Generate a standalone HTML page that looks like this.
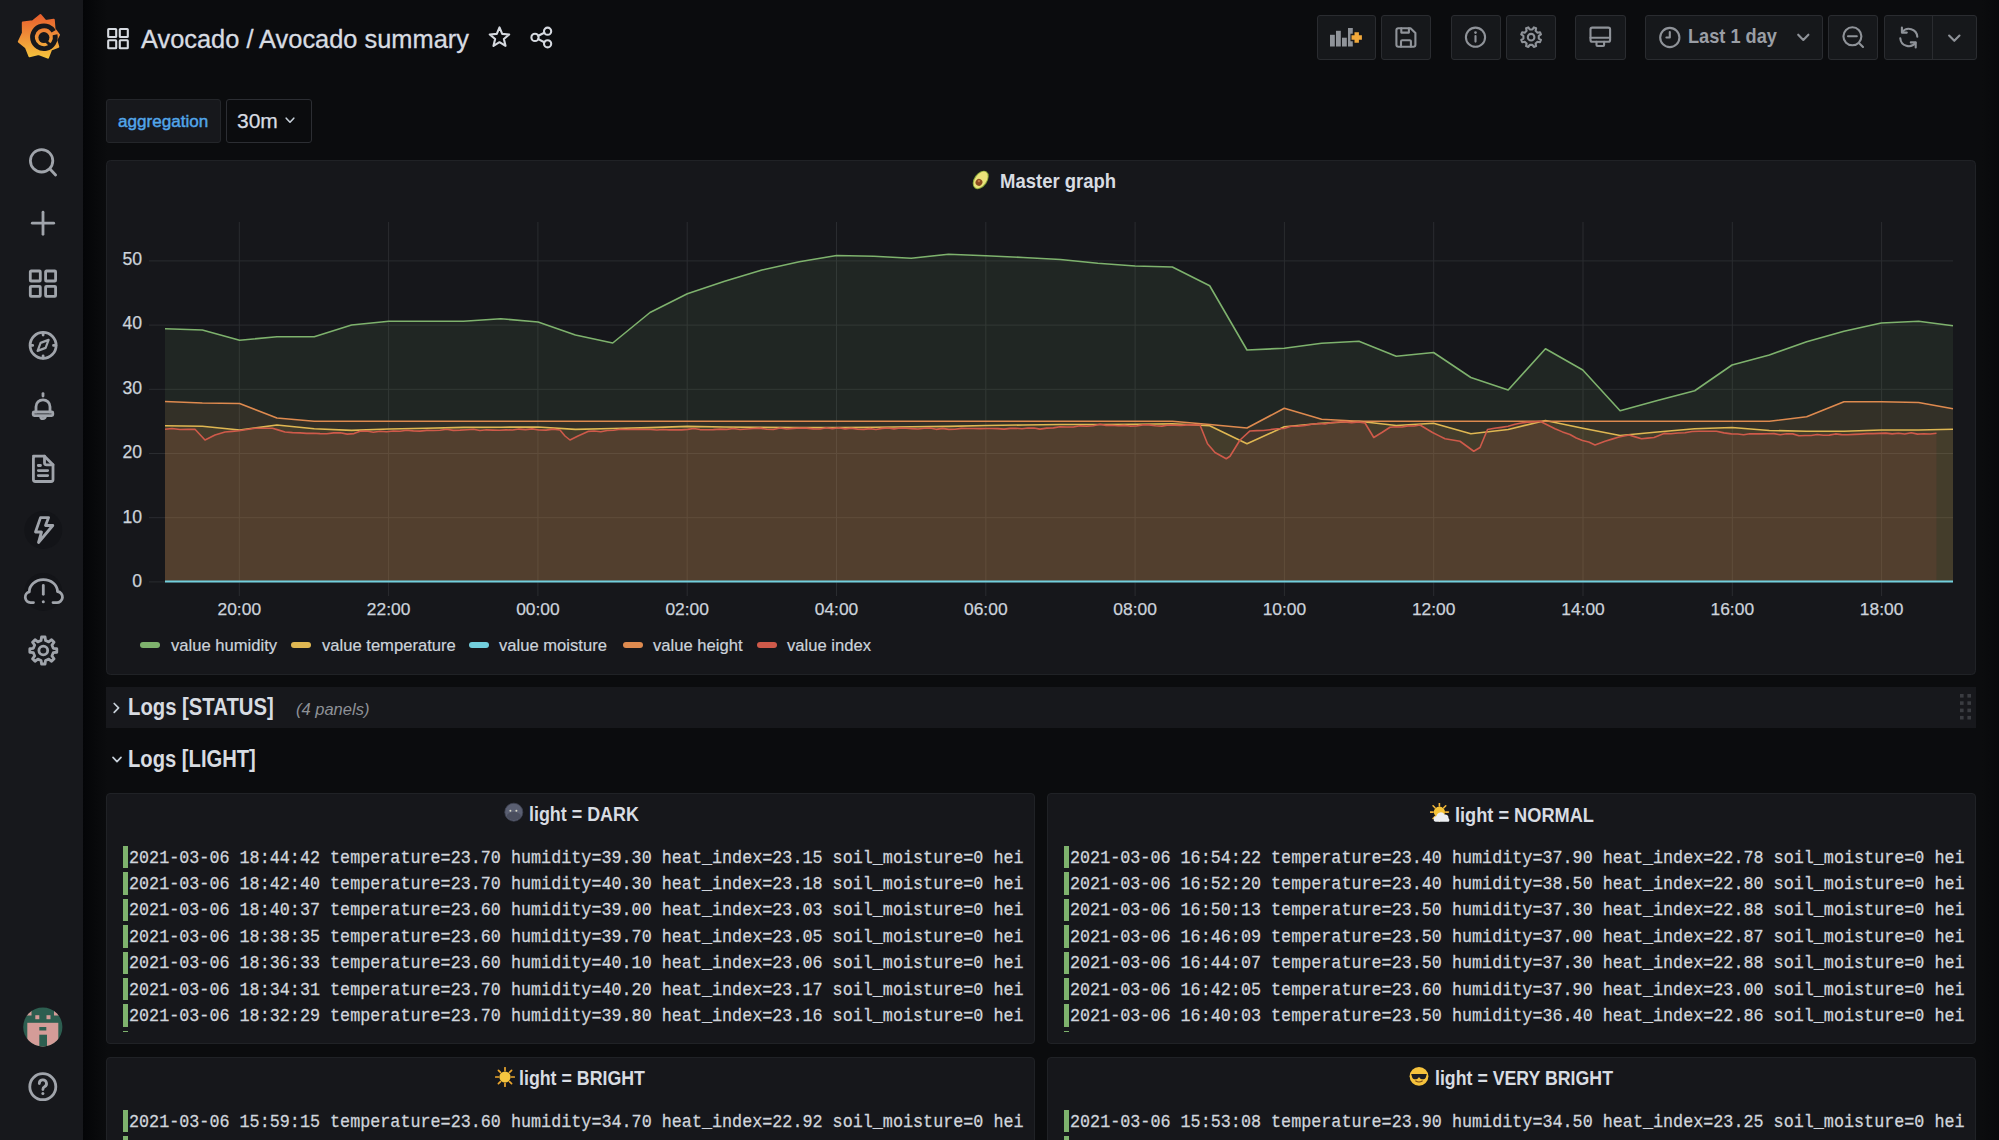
<!DOCTYPE html>
<html><head><meta charset="utf-8">
<style>
*{box-sizing:border-box;margin:0;padding:0}
html,body{width:1999px;height:1140px;overflow:hidden;background:#0b0c0e;font-family:"Liberation Sans",sans-serif;color:#c7d0d9}
.a{position:absolute}
.side{left:0;top:0;width:83px;height:1140px;background:#17181c}
.shadow{left:83px;top:0;width:24px;height:1140px;background:linear-gradient(to right,#040507,#0b0c0e)}
.btn{position:absolute;top:15px;height:45px;background:#16181b;border:1px solid #2a2c30;border-radius:3px}
.panel{position:absolute;background:#16171b;border:1px solid #202226;border-radius:4px;overflow:hidden}
.ttl{position:absolute;font-weight:bold;color:#d8dce2;white-space:nowrap;line-height:1;transform:scaleY(1.14);transform-origin:0 0.8465em}
.ax{position:absolute;font-size:17.4px;color:#ccd3db;white-space:nowrap;line-height:1;-webkit-text-stroke:0.25px #ccd3db}
.ay{position:absolute;left:90px;width:52px;text-align:right;font-size:17.6px;color:#ccd3db;white-space:nowrap;line-height:1;-webkit-text-stroke:0.25px #ccd3db}
.lg{position:absolute;font-size:16.6px;color:#ccd3db;white-space:nowrap;top:638px;line-height:1;-webkit-text-stroke:0.2px #ccd3db}
.sw{position:absolute;top:642px;width:20px;height:6px;border-radius:3px}
.logs{position:absolute;overflow:hidden}
.ln{position:relative;height:26.4px}
.ln b{position:absolute;left:0;top:2px;width:5px;height:22.4px;background:#7eb26d}
.ln span{position:absolute;left:6px;top:1.7px;-webkit-text-stroke:0.25px #d0d5dc;font-family:"Liberation Mono",monospace;font-size:16.75px;line-height:26.4px;color:#d0d5dc;white-space:pre;transform:scaleY(1.14);transform-origin:0 17.7px}
</style></head><body>
<div class="a side"></div>
<div class="a shadow"></div>
<div class="a" style="left:1982px;top:0;width:17px;height:1140px;background:linear-gradient(to right,#0b0c0e,#08090b)"></div>

<svg class="a" style="left:0;top:0" width="1999" height="1140">
<rect x="106.5" y="160.5" width="1869" height="514" rx="4" fill="#16171b" stroke="#202226"/>
<line x1="149" y1="581.9" x2="1953" y2="581.9" stroke="#2a2c30" stroke-width="1"/>
<line x1="149" y1="517.7" x2="1953" y2="517.7" stroke="#2a2c30" stroke-width="1"/>
<line x1="149" y1="453.5" x2="1953" y2="453.5" stroke="#2a2c30" stroke-width="1"/>
<line x1="149" y1="389.3" x2="1953" y2="389.3" stroke="#2a2c30" stroke-width="1"/>
<line x1="149" y1="325.1" x2="1953" y2="325.1" stroke="#2a2c30" stroke-width="1"/>
<line x1="149" y1="260.9" x2="1953" y2="260.9" stroke="#2a2c30" stroke-width="1"/>
<line x1="239.3" y1="222" x2="239.3" y2="596" stroke="#2a2c30" stroke-width="1"/>
<line x1="388.6" y1="222" x2="388.6" y2="596" stroke="#2a2c30" stroke-width="1"/>
<line x1="537.9" y1="222" x2="537.9" y2="596" stroke="#2a2c30" stroke-width="1"/>
<line x1="687.2" y1="222" x2="687.2" y2="596" stroke="#2a2c30" stroke-width="1"/>
<line x1="836.5" y1="222" x2="836.5" y2="596" stroke="#2a2c30" stroke-width="1"/>
<line x1="985.8" y1="222" x2="985.8" y2="596" stroke="#2a2c30" stroke-width="1"/>
<line x1="1135.1" y1="222" x2="1135.1" y2="596" stroke="#2a2c30" stroke-width="1"/>
<line x1="1284.4" y1="222" x2="1284.4" y2="596" stroke="#2a2c30" stroke-width="1"/>
<line x1="1433.7" y1="222" x2="1433.7" y2="596" stroke="#2a2c30" stroke-width="1"/>
<line x1="1583.0" y1="222" x2="1583.0" y2="596" stroke="#2a2c30" stroke-width="1"/>
<line x1="1732.3" y1="222" x2="1732.3" y2="596" stroke="#2a2c30" stroke-width="1"/>
<line x1="1881.6" y1="222" x2="1881.6" y2="596" stroke="#2a2c30" stroke-width="1"/>
<path d="M165.00,328.75 L202.31,330.00 L239.62,340.25 L276.93,336.75 L314.24,336.75 L351.55,325.00 L388.86,321.25 L426.17,321.25 L463.48,321.25 L500.79,318.75 L538.10,322.00 L575.41,335.00 L612.72,343.00 L650.03,312.50 L687.34,293.75 L724.65,281.25 L761.96,270.00 L799.27,261.75 L836.58,255.50 L873.89,256.25 L911.20,258.25 L948.51,254.25 L985.82,255.75 L1023.13,257.50 L1060.44,259.50 L1097.75,263.25 L1135.06,266.00 L1172.37,267.00 L1209.68,285.75 L1246.99,350.00 L1284.30,348.25 L1321.61,343.25 L1358.92,341.25 L1396.23,356.25 L1433.54,352.50 L1470.85,377.50 L1508.16,390.00 L1545.47,348.75 L1582.78,370.00 L1620.09,410.75 L1657.40,400.50 L1694.71,390.75 L1732.02,365.00 L1769.33,355.00 L1806.64,341.75 L1843.95,331.25 L1881.26,323.00 L1918.57,321.25 L1953.00,325.75 L1953.00,581.5 L165.00,581.5 Z" fill="#7EB26D" fill-opacity="0.1"/>
<path d="M165.00,425.75 L202.31,426.25 L239.62,430.00 L276.93,425.00 L314.24,428.75 L351.55,430.40 L388.86,429.00 L426.17,428.20 L463.48,427.40 L500.79,427.20 L538.10,427.00 L575.41,429.40 L612.72,428.50 L650.03,427.60 L687.34,426.40 L724.65,427.00 L761.96,427.40 L799.27,427.50 L836.58,427.60 L873.89,427.20 L911.20,426.80 L948.51,426.40 L985.82,425.50 L1023.13,425.00 L1060.44,424.50 L1097.75,424.50 L1135.06,424.30 L1172.37,423.75 L1209.68,425.75 L1246.99,443.75 L1284.30,426.75 L1321.61,423.25 L1358.92,421.25 L1396.23,425.50 L1433.54,423.25 L1470.85,433.75 L1508.16,429.50 L1545.47,420.50 L1582.78,428.25 L1620.09,435.50 L1657.40,432.00 L1694.71,428.75 L1732.02,427.50 L1769.33,430.50 L1806.64,431.25 L1843.95,431.25 L1881.26,430.00 L1918.57,430.00 L1953.00,429.25 L1953.00,581.5 L165.00,581.5 Z" fill="#DFB752" fill-opacity="0.1"/>
<path d="M165.00,401.50 L202.31,403.00 L239.62,403.50 L276.93,418.00 L314.24,421.25 L351.55,421.25 L388.86,421.25 L426.17,421.25 L463.48,421.25 L500.79,421.25 L538.10,421.25 L575.41,421.25 L612.72,421.25 L650.03,421.25 L687.34,421.25 L724.65,421.25 L761.96,421.25 L799.27,421.25 L836.58,421.25 L873.89,421.25 L911.20,421.25 L948.51,421.25 L985.82,421.25 L1023.13,421.25 L1060.44,421.25 L1097.75,421.25 L1135.06,421.25 L1172.37,421.25 L1209.68,424.50 L1246.99,428.00 L1284.30,408.25 L1321.61,419.25 L1358.92,421.25 L1396.23,421.25 L1433.54,421.25 L1470.85,421.25 L1508.16,421.25 L1545.47,421.25 L1582.78,421.25 L1620.09,421.25 L1657.40,421.25 L1694.71,421.25 L1732.02,421.25 L1769.33,421.25 L1806.64,416.75 L1843.95,401.75 L1881.26,401.75 L1918.57,402.50 L1953.00,408.75 L1953.00,581.5 L165.00,581.5 Z" fill="#DE8A4F" fill-opacity="0.1"/>
<path d="M165.00,429.25 L172.00,428.50 L180.00,429.50 L187.50,429.38 L195.00,429.25 L205.00,440.00 L215.00,435.00 L225.00,432.00 L232.00,431.38 L239.00,430.75 L247.00,429.50 L255.00,428.25 L263.75,428.25 L272.50,428.25 L278.75,430.12 L285.00,432.00 L292.50,432.62 L300.00,432.83 L306.67,433.40 L313.33,433.21 L320.00,433.67 L326.80,433.72 L333.60,432.84 L340.40,432.78 L347.20,434.12 L354.00,433.60 L360.00,431.21 L366.67,431.07 L373.33,432.19 L380.00,431.25 L386.67,431.74 L393.33,431.06 L400.00,431.22 L406.67,430.27 L413.33,430.88 L420.00,431.09 L426.67,430.37 L433.33,430.55 L440.00,430.27 L446.67,429.30 L453.33,430.41 L460.00,430.15 L466.67,429.68 L473.33,429.25 L480.00,430.58 L486.50,429.83 L493.00,430.10 L499.50,430.23 L506.00,429.84 L512.50,430.05 L519.00,429.08 L525.50,429.61 L532.00,428.91 L539.00,429.95 L546.00,430.11 L553.00,429.11 L560.00,430.00 L565.00,436.00 L570.00,440.00 L578.00,436.00 L588.00,431.42 L594.40,431.07 L600.80,431.78 L607.20,430.46 L613.60,430.28 L620.00,429.28 L626.15,429.57 L632.31,429.33 L638.46,429.22 L644.62,429.55 L650.77,429.50 L656.92,429.97 L663.08,429.57 L669.23,429.92 L675.38,429.75 L681.54,429.92 L687.69,429.37 L693.85,428.51 L700.00,429.58 L706.67,429.74 L713.33,429.65 L720.00,429.11 L726.67,429.34 L733.33,428.54 L740.00,429.53 L746.67,429.05 L753.33,428.52 L760.00,428.10 L766.67,429.30 L773.33,429.45 L780.00,427.94 L786.67,429.05 L793.33,428.39 L800.00,427.94 L806.67,428.14 L813.33,428.86 L820.00,429.00 L826.25,427.70 L832.50,428.63 L838.75,427.75 L845.00,428.85 L851.25,428.25 L857.50,429.16 L863.75,429.34 L870.00,428.61 L876.00,429.42 L882.00,428.34 L888.00,427.98 L894.00,428.84 L900.00,427.95 L906.00,428.24 L912.00,428.59 L918.00,428.94 L924.00,428.23 L930.00,428.07 L936.25,429.34 L942.50,428.40 L948.75,429.38 L955.00,429.23 L961.25,428.35 L967.50,428.44 L973.75,428.48 L980.00,428.63 L986.00,428.55 L992.00,428.49 L998.00,428.59 L1004.00,429.10 L1010.00,428.41 L1016.00,428.29 L1022.00,428.75 L1028.00,427.98 L1034.00,428.08 L1040.00,429.16 L1046.67,428.13 L1053.33,427.88 L1060.00,426.72 L1066.67,427.06 L1073.33,427.03 L1080.00,425.83 L1086.67,426.25 L1093.33,425.74 L1100.00,424.30 L1106.00,425.35 L1112.00,425.25 L1118.00,425.74 L1124.00,425.36 L1130.00,426.08 L1136.36,426.06 L1142.73,424.85 L1149.09,424.84 L1155.45,425.76 L1161.82,426.15 L1168.18,424.94 L1174.55,425.20 L1180.91,425.35 L1187.27,424.85 L1193.64,424.85 L1200.00,425.00 L1207.50,443.75 L1215.00,452.50 L1226.25,458.75 L1230.00,456.25 L1240.00,440.00 L1250.00,430.95 L1256.67,430.62 L1263.33,430.57 L1270.00,429.68 L1277.00,428.80 L1284.00,428.44 L1291.00,426.24 L1298.00,426.11 L1305.00,425.38 L1311.67,424.20 L1318.33,423.56 L1325.00,423.99 L1331.67,422.58 L1338.33,422.00 L1345.00,421.90 L1351.67,422.65 L1358.33,422.03 L1365.00,423.00 L1373.75,437.50 L1381.88,432.50 L1390.00,427.22 L1396.00,426.73 L1402.00,427.03 L1408.00,425.90 L1414.00,426.07 L1420.00,425.00 L1426.25,428.75 L1432.50,432.50 L1438.75,435.62 L1445.00,438.75 L1452.50,440.00 L1460.00,441.25 L1466.88,446.25 L1473.75,451.25 L1480.00,447.50 L1487.50,429.47 L1494.38,428.30 L1501.25,427.37 L1508.12,426.30 L1515.00,424.17 L1521.25,423.06 L1527.50,422.14 L1533.75,422.05 L1540.00,421.25 L1547.50,425.00 L1555.00,428.75 L1562.50,431.88 L1570.00,434.51 L1576.25,437.99 L1582.50,440.54 L1588.75,441.99 L1595.00,445.00 L1605.00,441.25 L1612.00,439.12 L1619.00,437.00 L1629.00,435.00 L1635.25,436.88 L1641.50,438.75 L1647.75,438.12 L1654.00,437.50 L1664.00,433.40 L1671.00,433.74 L1678.00,432.98 L1685.00,432.74 L1692.00,431.50 L1699.00,431.25 L1707.75,431.25 L1716.50,431.25 L1724.00,432.88 L1731.50,433.91 L1737.57,434.06 L1743.64,434.76 L1749.71,433.81 L1755.79,433.83 L1761.86,433.83 L1767.93,433.73 L1774.00,433.61 L1780.25,434.74 L1786.50,433.82 L1792.75,433.89 L1799.00,435.71 L1805.07,435.50 L1811.14,435.56 L1817.21,434.57 L1823.29,435.29 L1829.36,435.15 L1835.43,433.91 L1841.50,434.64 L1847.83,434.72 L1854.17,434.38 L1860.50,434.08 L1866.83,433.65 L1873.17,433.66 L1879.50,433.41 L1885.83,433.09 L1892.17,433.86 L1898.50,433.31 L1904.83,434.08 L1911.17,432.79 L1917.50,434.10 L1923.83,433.69 L1930.17,433.99 L1936.50,433.25 L1936.50,581.5 L165.00,581.5 Z" fill="#CF5A4A" fill-opacity="0.1"/>
<path d="M165.00,328.75 L202.31,330.00 L239.62,340.25 L276.93,336.75 L314.24,336.75 L351.55,325.00 L388.86,321.25 L426.17,321.25 L463.48,321.25 L500.79,318.75 L538.10,322.00 L575.41,335.00 L612.72,343.00 L650.03,312.50 L687.34,293.75 L724.65,281.25 L761.96,270.00 L799.27,261.75 L836.58,255.50 L873.89,256.25 L911.20,258.25 L948.51,254.25 L985.82,255.75 L1023.13,257.50 L1060.44,259.50 L1097.75,263.25 L1135.06,266.00 L1172.37,267.00 L1209.68,285.75 L1246.99,350.00 L1284.30,348.25 L1321.61,343.25 L1358.92,341.25 L1396.23,356.25 L1433.54,352.50 L1470.85,377.50 L1508.16,390.00 L1545.47,348.75 L1582.78,370.00 L1620.09,410.75 L1657.40,400.50 L1694.71,390.75 L1732.02,365.00 L1769.33,355.00 L1806.64,341.75 L1843.95,331.25 L1881.26,323.00 L1918.57,321.25 L1953.00,325.75" fill="none" stroke="#7EB26D" stroke-width="1.6" stroke-linejoin="round"/>
<path d="M165.00,425.75 L202.31,426.25 L239.62,430.00 L276.93,425.00 L314.24,428.75 L351.55,430.40 L388.86,429.00 L426.17,428.20 L463.48,427.40 L500.79,427.20 L538.10,427.00 L575.41,429.40 L612.72,428.50 L650.03,427.60 L687.34,426.40 L724.65,427.00 L761.96,427.40 L799.27,427.50 L836.58,427.60 L873.89,427.20 L911.20,426.80 L948.51,426.40 L985.82,425.50 L1023.13,425.00 L1060.44,424.50 L1097.75,424.50 L1135.06,424.30 L1172.37,423.75 L1209.68,425.75 L1246.99,443.75 L1284.30,426.75 L1321.61,423.25 L1358.92,421.25 L1396.23,425.50 L1433.54,423.25 L1470.85,433.75 L1508.16,429.50 L1545.47,420.50 L1582.78,428.25 L1620.09,435.50 L1657.40,432.00 L1694.71,428.75 L1732.02,427.50 L1769.33,430.50 L1806.64,431.25 L1843.95,431.25 L1881.26,430.00 L1918.57,430.00 L1953.00,429.25" fill="none" stroke="#DFB752" stroke-width="1.6" stroke-linejoin="round"/>
<line x1="165" y1="581.5" x2="1953" y2="581.5" stroke="#72CFDD" stroke-width="1.8"/>
<path d="M165.00,401.50 L202.31,403.00 L239.62,403.50 L276.93,418.00 L314.24,421.25 L351.55,421.25 L388.86,421.25 L426.17,421.25 L463.48,421.25 L500.79,421.25 L538.10,421.25 L575.41,421.25 L612.72,421.25 L650.03,421.25 L687.34,421.25 L724.65,421.25 L761.96,421.25 L799.27,421.25 L836.58,421.25 L873.89,421.25 L911.20,421.25 L948.51,421.25 L985.82,421.25 L1023.13,421.25 L1060.44,421.25 L1097.75,421.25 L1135.06,421.25 L1172.37,421.25 L1209.68,424.50 L1246.99,428.00 L1284.30,408.25 L1321.61,419.25 L1358.92,421.25 L1396.23,421.25 L1433.54,421.25 L1470.85,421.25 L1508.16,421.25 L1545.47,421.25 L1582.78,421.25 L1620.09,421.25 L1657.40,421.25 L1694.71,421.25 L1732.02,421.25 L1769.33,421.25 L1806.64,416.75 L1843.95,401.75 L1881.26,401.75 L1918.57,402.50 L1953.00,408.75" fill="none" stroke="#DE8A4F" stroke-width="1.6" stroke-linejoin="round"/>
<path d="M165.00,429.25 L172.00,428.50 L180.00,429.50 L187.50,429.38 L195.00,429.25 L205.00,440.00 L215.00,435.00 L225.00,432.00 L232.00,431.38 L239.00,430.75 L247.00,429.50 L255.00,428.25 L263.75,428.25 L272.50,428.25 L278.75,430.12 L285.00,432.00 L292.50,432.62 L300.00,432.83 L306.67,433.40 L313.33,433.21 L320.00,433.67 L326.80,433.72 L333.60,432.84 L340.40,432.78 L347.20,434.12 L354.00,433.60 L360.00,431.21 L366.67,431.07 L373.33,432.19 L380.00,431.25 L386.67,431.74 L393.33,431.06 L400.00,431.22 L406.67,430.27 L413.33,430.88 L420.00,431.09 L426.67,430.37 L433.33,430.55 L440.00,430.27 L446.67,429.30 L453.33,430.41 L460.00,430.15 L466.67,429.68 L473.33,429.25 L480.00,430.58 L486.50,429.83 L493.00,430.10 L499.50,430.23 L506.00,429.84 L512.50,430.05 L519.00,429.08 L525.50,429.61 L532.00,428.91 L539.00,429.95 L546.00,430.11 L553.00,429.11 L560.00,430.00 L565.00,436.00 L570.00,440.00 L578.00,436.00 L588.00,431.42 L594.40,431.07 L600.80,431.78 L607.20,430.46 L613.60,430.28 L620.00,429.28 L626.15,429.57 L632.31,429.33 L638.46,429.22 L644.62,429.55 L650.77,429.50 L656.92,429.97 L663.08,429.57 L669.23,429.92 L675.38,429.75 L681.54,429.92 L687.69,429.37 L693.85,428.51 L700.00,429.58 L706.67,429.74 L713.33,429.65 L720.00,429.11 L726.67,429.34 L733.33,428.54 L740.00,429.53 L746.67,429.05 L753.33,428.52 L760.00,428.10 L766.67,429.30 L773.33,429.45 L780.00,427.94 L786.67,429.05 L793.33,428.39 L800.00,427.94 L806.67,428.14 L813.33,428.86 L820.00,429.00 L826.25,427.70 L832.50,428.63 L838.75,427.75 L845.00,428.85 L851.25,428.25 L857.50,429.16 L863.75,429.34 L870.00,428.61 L876.00,429.42 L882.00,428.34 L888.00,427.98 L894.00,428.84 L900.00,427.95 L906.00,428.24 L912.00,428.59 L918.00,428.94 L924.00,428.23 L930.00,428.07 L936.25,429.34 L942.50,428.40 L948.75,429.38 L955.00,429.23 L961.25,428.35 L967.50,428.44 L973.75,428.48 L980.00,428.63 L986.00,428.55 L992.00,428.49 L998.00,428.59 L1004.00,429.10 L1010.00,428.41 L1016.00,428.29 L1022.00,428.75 L1028.00,427.98 L1034.00,428.08 L1040.00,429.16 L1046.67,428.13 L1053.33,427.88 L1060.00,426.72 L1066.67,427.06 L1073.33,427.03 L1080.00,425.83 L1086.67,426.25 L1093.33,425.74 L1100.00,424.30 L1106.00,425.35 L1112.00,425.25 L1118.00,425.74 L1124.00,425.36 L1130.00,426.08 L1136.36,426.06 L1142.73,424.85 L1149.09,424.84 L1155.45,425.76 L1161.82,426.15 L1168.18,424.94 L1174.55,425.20 L1180.91,425.35 L1187.27,424.85 L1193.64,424.85 L1200.00,425.00 L1207.50,443.75 L1215.00,452.50 L1226.25,458.75 L1230.00,456.25 L1240.00,440.00 L1250.00,430.95 L1256.67,430.62 L1263.33,430.57 L1270.00,429.68 L1277.00,428.80 L1284.00,428.44 L1291.00,426.24 L1298.00,426.11 L1305.00,425.38 L1311.67,424.20 L1318.33,423.56 L1325.00,423.99 L1331.67,422.58 L1338.33,422.00 L1345.00,421.90 L1351.67,422.65 L1358.33,422.03 L1365.00,423.00 L1373.75,437.50 L1381.88,432.50 L1390.00,427.22 L1396.00,426.73 L1402.00,427.03 L1408.00,425.90 L1414.00,426.07 L1420.00,425.00 L1426.25,428.75 L1432.50,432.50 L1438.75,435.62 L1445.00,438.75 L1452.50,440.00 L1460.00,441.25 L1466.88,446.25 L1473.75,451.25 L1480.00,447.50 L1487.50,429.47 L1494.38,428.30 L1501.25,427.37 L1508.12,426.30 L1515.00,424.17 L1521.25,423.06 L1527.50,422.14 L1533.75,422.05 L1540.00,421.25 L1547.50,425.00 L1555.00,428.75 L1562.50,431.88 L1570.00,434.51 L1576.25,437.99 L1582.50,440.54 L1588.75,441.99 L1595.00,445.00 L1605.00,441.25 L1612.00,439.12 L1619.00,437.00 L1629.00,435.00 L1635.25,436.88 L1641.50,438.75 L1647.75,438.12 L1654.00,437.50 L1664.00,433.40 L1671.00,433.74 L1678.00,432.98 L1685.00,432.74 L1692.00,431.50 L1699.00,431.25 L1707.75,431.25 L1716.50,431.25 L1724.00,432.88 L1731.50,433.91 L1737.57,434.06 L1743.64,434.76 L1749.71,433.81 L1755.79,433.83 L1761.86,433.83 L1767.93,433.73 L1774.00,433.61 L1780.25,434.74 L1786.50,433.82 L1792.75,433.89 L1799.00,435.71 L1805.07,435.50 L1811.14,435.56 L1817.21,434.57 L1823.29,435.29 L1829.36,435.15 L1835.43,433.91 L1841.50,434.64 L1847.83,434.72 L1854.17,434.38 L1860.50,434.08 L1866.83,433.65 L1873.17,433.66 L1879.50,433.41 L1885.83,433.09 L1892.17,433.86 L1898.50,433.31 L1904.83,434.08 L1911.17,432.79 L1917.50,434.10 L1923.83,433.69 L1930.17,433.99 L1936.50,433.25" fill="none" stroke="#CF5A4A" stroke-width="1.6" stroke-linejoin="round"/>
</svg>

<div class="btn" style="left:1317px;width:59px"></div>
<div class="btn" style="left:1381px;width:50px"></div>
<div class="btn" style="left:1451px;width:50px"></div>
<div class="btn" style="left:1506px;width:50px"></div>
<div class="btn" style="left:1575px;width:51px"></div>
<div class="btn" style="left:1645px;width:178px"></div>
<div class="btn" style="left:1828px;width:50px"></div>
<div class="btn" style="left:1884px;width:93px"></div>
<div class="a" style="left:1932px;top:16px;width:1px;height:43px;background:#2a2c30"></div>

<div class="a" style="left:141px;top:27px;font-size:25.4px;color:#d8dce2;-webkit-text-stroke:0.3px #d8dce2;white-space:nowrap;line-height:1">Avocado / Avocado summary</div>
<div class="a" style="left:1688px;top:28px;font-size:18.2px;font-weight:bold;color:#9a9ea5;white-space:nowrap;line-height:1;transform:scaleY(1.1);transform-origin:0 0.8465em">Last 1 day</div>

<div class="a" style="left:106px;top:99px;width:115px;height:44px;background:#17181c;border:1px solid #24262a;border-radius:3px"></div>
<div class="a" style="left:118px;top:112.5px;font-size:17.1px;color:#52a6ea;-webkit-text-stroke:0.45px #52a6ea;white-space:nowrap;line-height:1">aggregation</div>
<div class="a" style="left:226px;top:99px;width:86px;height:44px;background:#0b0c0e;border:1px solid #2c2e33;border-radius:3px"></div>
<div class="a" style="left:237px;top:110px;font-size:21px;color:#d8dce2;-webkit-text-stroke:0.25px #d8dce2;white-space:nowrap;line-height:1">30m</div>

<div class="ttl" style="left:1000px;top:172.5px;font-size:18.5px">Master graph</div>

<div class="ay" style="top:251px">50</div>
<div class="ay" style="top:315px">40</div>
<div class="ay" style="top:380px">30</div>
<div class="ay" style="top:444px">20</div>
<div class="ay" style="top:509px">10</div>
<div class="ay" style="top:573px">0</div>
<div class="ax" style="left:209.3px;width:60px;text-align:center;top:601px">20:00</div>
<div class="ax" style="left:358.6px;width:60px;text-align:center;top:601px">22:00</div>
<div class="ax" style="left:507.9px;width:60px;text-align:center;top:601px">00:00</div>
<div class="ax" style="left:657.2px;width:60px;text-align:center;top:601px">02:00</div>
<div class="ax" style="left:806.5px;width:60px;text-align:center;top:601px">04:00</div>
<div class="ax" style="left:955.8px;width:60px;text-align:center;top:601px">06:00</div>
<div class="ax" style="left:1105.1px;width:60px;text-align:center;top:601px">08:00</div>
<div class="ax" style="left:1254.4px;width:60px;text-align:center;top:601px">10:00</div>
<div class="ax" style="left:1403.7px;width:60px;text-align:center;top:601px">12:00</div>
<div class="ax" style="left:1553.0px;width:60px;text-align:center;top:601px">14:00</div>
<div class="ax" style="left:1702.3px;width:60px;text-align:center;top:601px">16:00</div>
<div class="ax" style="left:1851.6px;width:60px;text-align:center;top:601px">18:00</div>

<div class="sw" style="left:140px;background:#7EB26D"></div><div class="lg" style="left:171px">value humidity</div>
<div class="sw" style="left:291px;background:#DFB752"></div><div class="lg" style="left:322px">value temperature</div>
<div class="sw" style="left:469px;background:#72CFDD"></div><div class="lg" style="left:499px">value moisture</div>
<div class="sw" style="left:623px;background:#DE8A4F"></div><div class="lg" style="left:653px">value height</div>
<div class="sw" style="left:757px;background:#CF5A4A"></div><div class="lg" style="left:787px">value index</div>

<div class="a" style="left:106px;top:687px;width:1870px;height:41px;background:#17181c"></div>
<div class="ttl" style="left:128px;top:698px;font-size:20.3px">Logs [STATUS]</div>
<div class="a" style="left:296px;top:701px;font-size:16.5px;font-style:italic;color:#8e9197;white-space:nowrap;line-height:1">(4 panels)</div>
<div class="ttl" style="left:128px;top:750px;font-size:20.2px">Logs [LIGHT]</div>

<div class="panel" style="left:106px;top:793px;width:929px;height:251px"></div>
<div class="panel" style="left:1047px;top:793px;width:929px;height:251px"></div>
<div class="panel" style="left:106px;top:1057px;width:929px;height:200px"></div>
<div class="panel" style="left:1047px;top:1057px;width:929px;height:200px"></div>

<div class="ttl" style="left:529px;top:806.5px;font-size:17.9px">light = DARK</div>
<div class="ttl" style="left:1455px;top:806.5px;font-size:18.2px">light = NORMAL</div>
<div class="ttl" style="left:519px;top:1070.5px;font-size:17.8px">light = BRIGHT</div>
<div class="ttl" style="left:1435px;top:1070.5px;font-size:17.75px">light = VERY BRIGHT</div>

<div class="logs" style="left:123px;top:844px;width:901px;height:188px"><div class="ln"><b></b><span>2021-03-06 18:44:42 temperature=23.70 humidity=39.30 heat_index=23.15 soil_moisture=0 height</span></div><div class="ln"><b></b><span>2021-03-06 18:42:40 temperature=23.70 humidity=40.30 heat_index=23.18 soil_moisture=0 height</span></div><div class="ln"><b></b><span>2021-03-06 18:40:37 temperature=23.60 humidity=39.00 heat_index=23.03 soil_moisture=0 height</span></div><div class="ln"><b></b><span>2021-03-06 18:38:35 temperature=23.60 humidity=39.70 heat_index=23.05 soil_moisture=0 height</span></div><div class="ln"><b></b><span>2021-03-06 18:36:33 temperature=23.60 humidity=40.10 heat_index=23.06 soil_moisture=0 height</span></div><div class="ln"><b></b><span>2021-03-06 18:34:31 temperature=23.70 humidity=40.20 heat_index=23.17 soil_moisture=0 height</span></div><div class="ln"><b></b><span>2021-03-06 18:32:29 temperature=23.70 humidity=39.80 heat_index=23.16 soil_moisture=0 height</span></div><div class="ln"><b></b><span></span></div></div>
<div class="logs" style="left:1064px;top:844px;width:901px;height:188px"><div class="ln"><b></b><span>2021-03-06 16:54:22 temperature=23.40 humidity=37.90 heat_index=22.78 soil_moisture=0 height</span></div><div class="ln"><b></b><span>2021-03-06 16:52:20 temperature=23.40 humidity=38.50 heat_index=22.80 soil_moisture=0 height</span></div><div class="ln"><b></b><span>2021-03-06 16:50:13 temperature=23.50 humidity=37.30 heat_index=22.88 soil_moisture=0 height</span></div><div class="ln"><b></b><span>2021-03-06 16:46:09 temperature=23.50 humidity=37.00 heat_index=22.87 soil_moisture=0 height</span></div><div class="ln"><b></b><span>2021-03-06 16:44:07 temperature=23.50 humidity=37.30 heat_index=22.88 soil_moisture=0 height</span></div><div class="ln"><b></b><span>2021-03-06 16:42:05 temperature=23.60 humidity=37.90 heat_index=23.00 soil_moisture=0 height</span></div><div class="ln"><b></b><span>2021-03-06 16:40:03 temperature=23.50 humidity=36.40 heat_index=22.86 soil_moisture=0 height</span></div><div class="ln"><b></b><span></span></div></div>
<div class="logs" style="left:123px;top:1108px;width:901px;height:40px"><div class="ln"><b></b><span>2021-03-06 15:59:15 temperature=23.60 humidity=34.70 heat_index=22.92 soil_moisture=0 height</span></div><div class="ln"><b></b><span></span></div></div>
<div class="logs" style="left:1064px;top:1108px;width:901px;height:40px"><div class="ln"><b></b><span>2021-03-06 15:53:08 temperature=23.90 humidity=34.50 heat_index=23.25 soil_moisture=0 height</span></div><div class="ln"><b></b><span></span></div></div>

<svg class="a" style="left:0px;top:0px" width="83" height="70" viewBox="0 0 83 70"><defs><linearGradient id="lg" x1="0" y1="0" x2="0" y2="1"><stop offset="0" stop-color="#e85f2d"/><stop offset="0.5" stop-color="#ef8f38"/><stop offset="1" stop-color="#f4c23c"/></linearGradient></defs>
<path d="M40.5,15.1 L45.6,21.1 L53.7,19.8 L54.4,28.9 L58.9,34.8 L56.2,40.1 L58.2,46.7 L51.0,49.5 L47.9,57.5 L38.7,54.0 L29.5,56.2 L26.0,47.4 L18.9,41.7 L23.0,32.9 L22.9,22.7 L32.8,21.4 Z" fill="url(#lg)" stroke="url(#lg)" stroke-width="2.2" stroke-linejoin="round"/>
<circle cx="43.9" cy="37.2" r="11.4" fill="none" stroke="#17181c" stroke-width="4.8" stroke-dasharray="67.4 4.2" transform="rotate(-12 43.9 37.2)"/>
<circle cx="43.9" cy="37.6" r="5.5" fill="#17181c"/>
<path d="M46.5,41.5 L50.5,45.5" stroke="#17181c" stroke-width="3"/></svg>
<svg class="a" style="left:0px;top:140px" width="83" height="45" viewBox="0 0 83 45"><circle cx="41.6" cy="20.8" r="11.2" stroke="#a0a4ab" stroke-width="2.8" fill="none" stroke-linecap="round" stroke-linejoin="round"/><line x1="50" y1="29" x2="55.6" y2="35" stroke="#a0a4ab" stroke-width="2.8" fill="none" stroke-linecap="round" stroke-linejoin="round"/></svg>
<svg class="a" style="left:0px;top:205px" width="83" height="40" viewBox="0 0 83 40"><line x1="32.3" y1="18.2" x2="53.7" y2="18.2" stroke="#a0a4ab" stroke-width="2.8" fill="none" stroke-linecap="round" stroke-linejoin="round"/><line x1="43" y1="7.2" x2="43" y2="29.3" stroke="#a0a4ab" stroke-width="2.8" fill="none" stroke-linecap="round" stroke-linejoin="round"/></svg>
<svg class="a" style="left:0px;top:265px" width="83" height="40" viewBox="0 0 83 40"><rect x="30.3" y="6" width="10" height="10" rx="0.8" stroke="#a0a4ab" stroke-width="2.8" fill="none" stroke-linecap="round" stroke-linejoin="round"/><rect x="45.6" y="6" width="10" height="10" rx="0.8" stroke="#a0a4ab" stroke-width="2.8" fill="none" stroke-linecap="round" stroke-linejoin="round"/><rect x="30.3" y="21.3" width="10" height="10" rx="0.8" stroke="#a0a4ab" stroke-width="2.8" fill="none" stroke-linecap="round" stroke-linejoin="round"/><rect x="45.6" y="21.3" width="10" height="10" rx="0.8" stroke="#a0a4ab" stroke-width="2.8" fill="none" stroke-linecap="round" stroke-linejoin="round"/></svg>
<svg class="a" style="left:0px;top:325px" width="83" height="42" viewBox="0 0 83 42"><circle cx="43.1" cy="20.4" r="13" stroke="#a0a4ab" stroke-width="2.8" fill="none" stroke-linecap="round" stroke-linejoin="round"/><path d="M43.1,7.6v2.4M43.1,30.8v2.4M30.3,20.4h2.4M53.5,20.4h2.4" stroke="#a0a4ab" stroke-width="2.8" fill="none" stroke-linecap="round" stroke-linejoin="round"/><path d="M48.6,14.9 L45.6,22.9 L37.6,25.9 L40.6,17.9 Z" fill="none" stroke="#a0a4ab" stroke-width="2.2" stroke-linejoin="round"/></svg>
<svg class="a" style="left:0px;top:385px" width="83" height="42" viewBox="0 0 83 42"><path d="M36,27 V21.8 A7,7 0 0 1 50,21.8 V27" stroke="#a0a4ab" stroke-width="2.8" fill="none" stroke-linecap="round" stroke-linejoin="round"/><rect x="33.2" y="27" width="19.6" height="3.6" rx="1" stroke="#a0a4ab" stroke-width="2.8" fill="none" stroke-linecap="round" stroke-linejoin="round"/><path d="M43,8.6 v2.4" stroke="#a0a4ab" stroke-width="2.8" fill="none" stroke-linecap="round" stroke-linejoin="round"/><path d="M40.6,31.4 a2.4,2.2 0 0 0 4.8,0" stroke="#a0a4ab" stroke-width="2.8" fill="none" stroke-linecap="round" stroke-linejoin="round"/></svg>
<svg class="a" style="left:0px;top:448px" width="83" height="42" viewBox="0 0 83 42"><path d="M33.4,8.2 H44.5 L53,16.8 V31.5 a2,2 0 0 1 -2,2 H35.4 a2,2 0 0 1 -2,-2 V10.2 a2,2 0 0 1 2,-2 Z" stroke="#a0a4ab" stroke-width="2.8" fill="none" stroke-linecap="round" stroke-linejoin="round"/><path d="M44.5,8.2 V14.8 a2,2 0 0 0 2,2 H53" stroke="#a0a4ab" stroke-width="2.8" fill="none" stroke-linecap="round" stroke-linejoin="round"/><path d="M38.3,17.5h2.2M38.3,22.6h9.4M38.3,27.6h9.4" stroke="#a0a4ab" stroke-width="2.8" fill="none" stroke-linecap="round" stroke-linejoin="round"/></svg>
<svg class="a" style="left:0px;top:505px" width="83" height="50" viewBox="0 0 83 50"><circle cx="43.3" cy="25" r="19" fill="#131418"/><path d="M40.5,12.6 H48.6 L45.5,20.5 H52.8 L38.5,37.5 L41.5,27 H35.5 Z" stroke="#a0a4ab" stroke-width="2.8" fill="none" stroke-linecap="round" stroke-linejoin="round"/></svg>
<svg class="a" style="left:0px;top:567px" width="83" height="50" viewBox="0 0 83 50"><circle cx="43.3" cy="25" r="19" fill="#131418"/><path d="M33.5,35.6 H30.5 a5.5,5.5 0 0 1 -1.2,-10.8 A14,12 0 0 1 57.5,24.5 a5.5,5.5 0 0 1 -1.2,11.1 H53" stroke="#a0a4ab" stroke-width="2.8" fill="none" stroke-linecap="round" stroke-linejoin="round"/><path d="M43.3,18.5 v8.8" stroke="#a0a4ab" stroke-width="2.8" fill="none" stroke-linecap="round" stroke-linejoin="round"/><circle cx="43.3" cy="34.8" r="1.5" fill="#a0a4ab"/></svg>
<svg class="a" style="left:0px;top:625px" width="83" height="52" viewBox="0 0 83 52"><path d="M53.25,23.27 L56.79,23.74 L56.79,27.26 L53.25,27.73 L51.91,30.96 L54.08,33.79 L51.59,36.28 L48.76,34.11 L45.53,35.45 L45.06,38.99 L41.54,38.99 L41.07,35.45 L37.84,34.11 L35.01,36.28 L32.52,33.79 L34.69,30.96 L33.35,27.73 L29.81,27.26 L29.81,23.74 L33.35,23.27 L34.69,20.04 L32.52,17.21 L35.01,14.72 L37.84,16.89 L41.07,15.55 L41.54,12.01 L45.06,12.01 L45.53,15.55 L48.76,16.89 L51.59,14.72 L54.08,17.21 L51.91,20.04Z" stroke="#a0a4ab" stroke-width="2.8" fill="none" stroke-linecap="round" stroke-linejoin="round"/><circle cx="43.3" cy="25.5" r="4.4" stroke="#a0a4ab" stroke-width="2.8" fill="none" stroke-linecap="round" stroke-linejoin="round"/></svg>
<svg class="a" style="left:0px;top:1000px" width="83" height="55" viewBox="0 0 83 55"><defs><clipPath id="avc"><circle cx="42.8" cy="27" r="19.6"/></clipPath></defs>
<g clip-path="url(#avc)"><rect x="20" y="5" width="46" height="44" fill="#2d5e50"/>
<rect x="27.3" y="22.8" width="31" height="26" fill="#d49c98"/>
<rect x="26" y="8" width="5.5" height="7.5" fill="#d49c98"/><rect x="54" y="8" width="5.5" height="7.5" fill="#d49c98"/>
<rect x="35.3" y="15.2" width="4" height="4" fill="#d49c98"/><rect x="46.5" y="15.2" width="4" height="4" fill="#d49c98"/>
<rect x="39.3" y="27" width="7" height="3.5" fill="#2d5e50"/><rect x="39.3" y="34.7" width="7.7" height="14" fill="#2d5e50"/></g></svg>
<svg class="a" style="left:0px;top:1065px" width="83" height="45" viewBox="0 0 83 45"><circle cx="42.8" cy="21.7" r="13" stroke="#a0a4ab" stroke-width="2.8" fill="none" stroke-linecap="round" stroke-linejoin="round"/><path d="M39.3,18.5 a3.6,3.6 0 1 1 5.2,3.2 c-1.2,0.6 -1.6,1.3 -1.6,2.8" stroke="#a0a4ab" stroke-width="2.8" fill="none" stroke-linecap="round" stroke-linejoin="round"/><circle cx="42.9" cy="28.6" r="1.5" fill="#a0a4ab"/></svg>
<svg class="a" style="left:100px;top:20px" width="40" height="40" viewBox="0 0 40 40"><rect x="8.2" y="9" width="8" height="8" rx="0.6" stroke="#d6dae0" stroke-width="2.1" fill="none" stroke-linecap="round" stroke-linejoin="round"/><rect x="19.8" y="9" width="8" height="8" rx="0.6" stroke="#d6dae0" stroke-width="2.1" fill="none" stroke-linecap="round" stroke-linejoin="round"/><rect x="8.2" y="20.3" width="8" height="8" rx="0.6" stroke="#d6dae0" stroke-width="2.1" fill="none" stroke-linecap="round" stroke-linejoin="round"/><rect x="19.8" y="20.3" width="8" height="8" rx="0.6" stroke="#d6dae0" stroke-width="2.1" fill="none" stroke-linecap="round" stroke-linejoin="round"/></svg>
<svg class="a" style="left:480px;top:15px" width="40" height="40" viewBox="0 0 40 40"><path d="M19.50,12.40 L22.20,18.88 L29.20,19.45 L23.87,24.02 L25.50,30.85 L19.50,27.20 L13.50,30.85 L15.13,24.02 L9.80,19.45 L16.80,18.88Z" stroke="#d6dae0" stroke-width="2.1" fill="none" stroke-linecap="round" stroke-linejoin="round"/></svg>
<svg class="a" style="left:520px;top:15px" width="40" height="40" viewBox="0 0 40 40"><circle cx="27.6" cy="16.2" r="3.6" stroke="#d6dae0" stroke-width="2.1" fill="none" stroke-linecap="round" stroke-linejoin="round"/><circle cx="15" cy="22.4" r="3.6" stroke="#d6dae0" stroke-width="2.1" fill="none" stroke-linecap="round" stroke-linejoin="round"/><circle cx="27.6" cy="28.8" r="3.6" stroke="#d6dae0" stroke-width="2.1" fill="none" stroke-linecap="round" stroke-linejoin="round"/><path d="M18.3,20.7 L24.3,17.8 M18.3,24.1 L24.3,27.2" stroke="#d6dae0" stroke-width="2.1" fill="none" stroke-linecap="round" stroke-linejoin="round"/></svg>
<svg class="a" style="left:1317px;top:15px" width="60" height="45" viewBox="0 0 60 45"><rect x="13" y="19.8" width="4.8" height="11.7" fill="#8f9399"/><rect x="19" y="15.8" width="4.8" height="15.7" fill="#8f9399"/><rect x="25" y="22.7" width="4.8" height="8.8" fill="#8f9399"/><rect x="31" y="13" width="4.8" height="18.5" fill="#8f9399"/><path d="M39.7,16.3 V28.7 M33.5,22.5 H45.9" stroke="#17181c" stroke-width="7.5"/><path d="M39.7,17.3 V27.7 M34.5,22.5 H44.9" stroke="#f2a93b" stroke-width="4.4"/></svg>
<svg class="a" style="left:1381px;top:15px" width="50" height="45" viewBox="0 0 50 45"><path d="M17,13.2 H29.5 L34.4,18.1 V29.8 a2,2 0 0 1 -2,2 H17.4 a2,2 0 0 1 -2,-2 V15.2 a2,2 0 0 1 2,-2 Z" stroke="#8f9399" stroke-width="2.1" fill="none" stroke-linecap="round" stroke-linejoin="round"/><path d="M20.3,13.4 v4.2 h7.6 v-4.2 M20,31.6 v-5.2 a1.2,1.2 0 0 1 1.2,-1.2 h7.5 a1.2,1.2 0 0 1 1.2,1.2 v5.2" stroke="#8f9399" stroke-width="2.1" fill="none" stroke-linecap="round" stroke-linejoin="round"/></svg>
<svg class="a" style="left:1451px;top:15px" width="50" height="45" viewBox="0 0 50 45"><circle cx="24.5" cy="22.2" r="9.6" stroke="#8f9399" stroke-width="2.1" fill="none" stroke-linecap="round" stroke-linejoin="round"/><path d="M24.5,21 v5.6" stroke="#8f9399" stroke-width="2.1" fill="none" stroke-linecap="round" stroke-linejoin="round"/><circle cx="24.5" cy="17.6" r="1.3" fill="#8f9399"/></svg>
<svg class="a" style="left:1506px;top:15px" width="50" height="45" viewBox="0 0 50 45"><path d="M32.78,23.54 L34.92,24.95 L33.99,27.20 L31.48,26.69 L29.59,28.58 L30.10,31.09 L27.85,32.02 L26.44,29.88 L23.76,29.88 L22.35,32.02 L20.10,31.09 L20.61,28.58 L18.72,26.69 L16.21,27.20 L15.28,24.95 L17.42,23.54 L17.42,20.86 L15.28,19.45 L16.21,17.20 L18.72,17.71 L20.61,15.82 L20.10,13.31 L22.35,12.38 L23.76,14.52 L26.44,14.52 L27.85,12.38 L30.10,13.31 L29.59,15.82 L31.48,17.71 L33.99,17.20 L34.92,19.45 L32.78,20.86Z" stroke="#8f9399" stroke-width="2.1" fill="none" stroke-linecap="round" stroke-linejoin="round"/><circle cx="25.1" cy="22.2" r="3.3" stroke="#8f9399" stroke-width="2.1" fill="none" stroke-linecap="round" stroke-linejoin="round"/></svg>
<svg class="a" style="left:1575px;top:15px" width="50" height="45" viewBox="0 0 50 45"><rect x="15.5" y="12.6" width="19.6" height="14.2" rx="1.8" stroke="#8f9399" stroke-width="2.1" fill="none" stroke-linecap="round" stroke-linejoin="round"/><path d="M15.5,22.8 H35.1 M21.5,26.8 v3.2 a1,1 0 0 0 1,1 h5.6 a1,1 0 0 0 1,-1 v-3.2" stroke="#8f9399" stroke-width="2.1" fill="none" stroke-linecap="round" stroke-linejoin="round"/></svg>
<svg class="a" style="left:1645px;top:15px" width="50" height="45" viewBox="0 0 50 45"><circle cx="24.8" cy="22.5" r="9.6" stroke="#8f9399" stroke-width="2.1" fill="none" stroke-linecap="round" stroke-linejoin="round"/><path d="M24.8,17 v5.5 h-3.4" stroke="#8f9399" stroke-width="2.1" fill="none" stroke-linecap="round" stroke-linejoin="round"/></svg>
<svg class="a" style="left:1790px;top:15px" width="30" height="45" viewBox="0 0 30 45"><path d="M8.2,19.7 L13.3,25 L18.4,19.7" stroke="#8f9399" stroke-width="2.1" fill="none" stroke-linecap="round" stroke-linejoin="round"/></svg>
<svg class="a" style="left:1828px;top:15px" width="50" height="45" viewBox="0 0 50 45"><circle cx="24.4" cy="21.3" r="9" stroke="#8f9399" stroke-width="2.1" fill="none" stroke-linecap="round" stroke-linejoin="round"/><path d="M20,21.3 h8.8 M31.2,28.2 L35,32" stroke="#8f9399" stroke-width="2.1" fill="none" stroke-linecap="round" stroke-linejoin="round"/></svg>
<svg class="a" style="left:1884px;top:15px" width="50" height="45" viewBox="0 0 50 45"><g transform="translate(49.6,0) scale(-1,1)"><path d="M16.3,21.8 A8.5,8.5 0 0 1 31.5,17.2 M33.3,23.2 A8.5,8.5 0 0 1 18.1,27.8" stroke="#8f9399" stroke-width="2.1" fill="none" stroke-linecap="round" stroke-linejoin="round"/><path d="M31.7,12.6 V17.6 H26.8 M17.9,32.4 V27.4 H22.8" stroke="#8f9399" stroke-width="2.1" fill="none" stroke-linecap="round" stroke-linejoin="round"/></g></svg>
<svg class="a" style="left:1933px;top:15px" width="44" height="45" viewBox="0 0 44 45"><path d="M16.1,20.5 L21.3,25.8 L26.5,20.5" stroke="#8f9399" stroke-width="2.1" fill="none" stroke-linecap="round" stroke-linejoin="round"/></svg>
<svg class="a" style="left:280px;top:110px" width="20" height="20" viewBox="0 0 20 20"><path d="M6.2,8.2 L10,12.2 L13.8,8.2" stroke="#c7d0d9" stroke-width="1.6" fill="none" stroke-linecap="round" stroke-linejoin="round"/></svg>
<svg class="a" style="left:105px;top:695px" width="20" height="25" viewBox="0 0 20 25"><path d="M9.2,8.5 L13.6,12.9 L9.2,17.3" stroke="#c7d0d9" stroke-width="1.7" fill="none" stroke-linecap="round" stroke-linejoin="round"/></svg>
<svg class="a" style="left:105px;top:748px" width="20" height="25" viewBox="0 0 20 25"><path d="M8,9.4 L12,13.6 L16,9.4" stroke="#c7d0d9" stroke-width="1.7" fill="none" stroke-linecap="round" stroke-linejoin="round"/></svg>
<svg class="a" style="left:1960px;top:694px" width="12" height="26" viewBox="0 0 12 26"><rect x="0" y="0" width="3.6" height="3.6" fill="#3a3c41"/><rect x="0" y="7.3" width="3.6" height="3.6" fill="#3a3c41"/><rect x="0" y="14.6" width="3.6" height="3.6" fill="#3a3c41"/><rect x="0" y="21.9" width="3.6" height="3.6" fill="#3a3c41"/><rect x="7.4" y="0" width="3.6" height="3.6" fill="#3a3c41"/><rect x="7.4" y="7.3" width="3.6" height="3.6" fill="#3a3c41"/><rect x="7.4" y="14.6" width="3.6" height="3.6" fill="#3a3c41"/><rect x="7.4" y="21.9" width="3.6" height="3.6" fill="#3a3c41"/></svg>
<svg class="a" style="left:968px;top:166px" width="26" height="27" viewBox="0 0 26 27"><g transform="rotate(35 13 13.5)"><ellipse cx="13" cy="14" rx="6.6" ry="10.3" fill="#8aa83a"/><ellipse cx="13" cy="14" rx="5.6" ry="9.3" fill="#e9e27a"/><circle cx="13" cy="17" r="3.4" fill="#8a4b20"/><circle cx="12.2" cy="16" r="1.2" fill="#c27a44"/></g></svg>
<svg class="a" style="left:503px;top:801px" width="22" height="22" viewBox="0 0 22 22"><circle cx="10.8" cy="11.2" r="9" fill="#5a5f72"/><circle cx="10.8" cy="11.2" r="9" fill="none" stroke="#3f4352" stroke-width="0.8"/><ellipse cx="10.8" cy="15" rx="7" ry="4" fill="#4a4e5e"/><circle cx="7.4" cy="9.8" r="1" fill="#d8d8c8"/><circle cx="13.4" cy="9.8" r="1" fill="#d8d8c8"/></svg>
<svg class="a" style="left:1430px;top:803px" width="22" height="22" viewBox="0 0 22 22"><line x1="15.60" y1="9.10" x2="18.40" y2="9.10" stroke="#f0b43a" stroke-width="1.6" stroke-linecap="round"/><line x1="13.78" y1="13.48" x2="15.76" y2="15.46" stroke="#f0b43a" stroke-width="1.6" stroke-linecap="round"/><line x1="9.40" y1="15.30" x2="9.40" y2="18.10" stroke="#f0b43a" stroke-width="1.6" stroke-linecap="round"/><line x1="5.02" y1="13.48" x2="3.04" y2="15.46" stroke="#f0b43a" stroke-width="1.6" stroke-linecap="round"/><line x1="3.20" y1="9.10" x2="0.40" y2="9.10" stroke="#f0b43a" stroke-width="1.6" stroke-linecap="round"/><line x1="5.02" y1="4.72" x2="3.04" y2="2.74" stroke="#f0b43a" stroke-width="1.6" stroke-linecap="round"/><line x1="9.40" y1="2.90" x2="9.40" y2="0.10" stroke="#f0b43a" stroke-width="1.6" stroke-linecap="round"/><line x1="13.78" y1="4.72" x2="15.76" y2="2.74" stroke="#f0b43a" stroke-width="1.6" stroke-linecap="round"/><circle cx="9.4" cy="9.1" r="5.6" fill="#f5c338"/><path d="M5.5,18.8 a3,3 0 0 1 1,-5.8 a4.3,4.3 0 0 1 8,-1.4 a3.3,3.3 0 0 1 4,3.6 a2.3,2.3 0 0 1 0,3.6 Z" fill="#eceff2"/></svg>
<svg class="a" style="left:494.6px;top:1066.6px" width="20" height="20" viewBox="0 0 20 20"><line x1="16.40" y1="10.00" x2="19.30" y2="10.00" stroke="#eda72e" stroke-width="1.7" stroke-linecap="round"/><line x1="14.53" y1="14.53" x2="16.58" y2="16.58" stroke="#eda72e" stroke-width="1.7" stroke-linecap="round"/><line x1="10.00" y1="16.40" x2="10.00" y2="19.30" stroke="#eda72e" stroke-width="1.7" stroke-linecap="round"/><line x1="5.47" y1="14.53" x2="3.42" y2="16.58" stroke="#eda72e" stroke-width="1.7" stroke-linecap="round"/><line x1="3.60" y1="10.00" x2="0.70" y2="10.00" stroke="#eda72e" stroke-width="1.7" stroke-linecap="round"/><line x1="5.47" y1="5.47" x2="3.42" y2="3.42" stroke="#eda72e" stroke-width="1.7" stroke-linecap="round"/><line x1="10.00" y1="3.60" x2="10.00" y2="0.70" stroke="#eda72e" stroke-width="1.7" stroke-linecap="round"/><line x1="14.53" y1="5.47" x2="16.58" y2="3.42" stroke="#eda72e" stroke-width="1.7" stroke-linecap="round"/><circle cx="10" cy="10" r="5.6" fill="#f6c640"/></svg>
<svg class="a" style="left:1409px;top:1066px" width="21" height="21" viewBox="0 0 21 21"><circle cx="10" cy="10.3" r="9.4" fill="#f5c23c"/><path d="M2.2,8 H17.8 L16.8,11.6 a2.4,2.4 0 0 1 -2.4,1.6 h-1.6 a2.4,2.4 0 0 1 -2.2,-1.8 h-1.2 a2.4,2.4 0 0 1 -2.2,1.8 h-1.6 a2.4,2.4 0 0 1 -2.4,-1.6 Z" fill="#1c1d22"/><path d="M6.8,15 q3.2,2 6.4,0" stroke="#7a4b16" stroke-width="1.2" fill="none" stroke-linecap="round"/></svg>
</body></html>
